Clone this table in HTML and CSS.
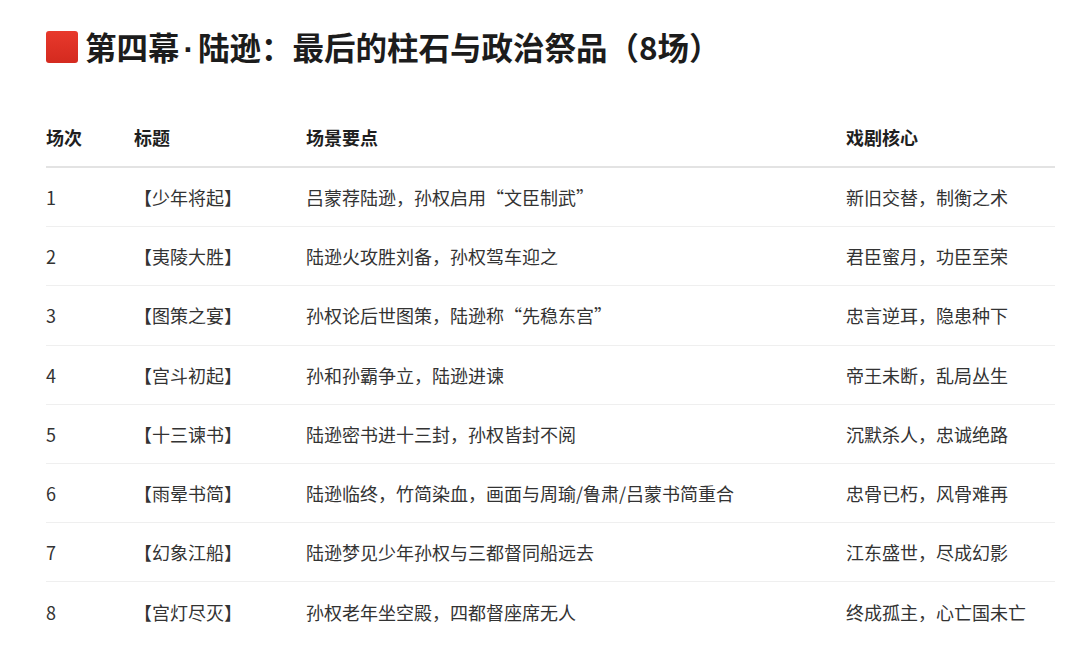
FILE: index.html
```html
<!DOCTYPE html>
<html lang="zh">
<head>
<meta charset="utf-8">
<link rel="stylesheet" href="styles.css">
</head>
<body>
<div class="page">
  <h1 class="title"><span class="mark"></span><span>第四幕<span class="sep">·</span>陆逊：最后的柱石与政治祭品（8场）</span></h1>
  <div class="table">
    <div class="row head">
      <div>场次</div><div>标题</div><div>场景要点</div><div>戏剧核心</div>
    </div>
    <div class="row"><div>1</div><div>【少年将起】</div><div>吕蒙荐陆逊，孙权启用“文臣制武”</div><div>新旧交替，制衡之术</div></div>
    <div class="row"><div>2</div><div>【夷陵大胜】</div><div>陆逊火攻胜刘备，孙权驾车迎之</div><div>君臣蜜月，功臣至荣</div></div>
    <div class="row"><div>3</div><div>【图策之宴】</div><div>孙权论后世图策，陆逊称“先稳东宫”</div><div>忠言逆耳，隐患种下</div></div>
    <div class="row"><div>4</div><div>【宫斗初起】</div><div>孙和孙霸争立，陆逊进谏</div><div>帝王未断，乱局丛生</div></div>
    <div class="row"><div>5</div><div>【十三谏书】</div><div>陆逊密书进十三封，孙权皆封不阅</div><div>沉默杀人，忠诚绝路</div></div>
    <div class="row"><div>6</div><div>【雨晕书简】</div><div>陆逊临终，竹简染血，画面与周瑜/鲁肃/吕蒙书简重合</div><div>忠骨已朽，风骨难再</div></div>
    <div class="row"><div>7</div><div>【幻象江船】</div><div>陆逊梦见少年孙权与三都督同船远去</div><div>江东盛世，尽成幻影</div></div>
    <div class="row last"><div>8</div><div>【宫灯尽灭】</div><div>孙权老年坐空殿，四都督座席无人</div><div>终成孤主，心亡国未亡</div></div>
  </div>
</div>
</body>
</html>
```
FILE: styles.css
```css
html, body {
  margin: 0;
  padding: 0;
  background: #ffffff;
}
body {
  font-family: "Noto Sans CJK SC", "Noto Sans", sans-serif;
  color: #333333;
}
.page {
  padding: 27px 25px 0 46px;
}
.title {
  display: flex;
  align-items: center;
  gap: 7px;
  margin: 0 0 41px 0;
  height: 40px;
  font-size: 31.5px;
  line-height: 40px;
  font-weight: 700;
  color: #1c1c1c;
}
.sep {
  font-family: "Liberation Sans", sans-serif;
  padding: 0 4px;
}
.mark {
  width: 32px;
  height: 32px;
  border-radius: 3px;
  background: linear-gradient(180deg, #e8392c 0%, #d42a1f 100%);
  flex: none;
}
.table {
  width: 1009px;
}
.row {
  display: grid;
  grid-template-columns: 88px 172px 540px 209px;
  align-items: center;
  height: 59.2px;
  box-sizing: border-box;
  border-bottom: 1px solid #efefef;
  font-size: 18px;
  line-height: 26px;
  color: #333333;
}
.row > div {
  white-space: nowrap;
}
.row.head {
  height: 60px;
  border-bottom: 2px solid #e3e3e3;
  font-weight: 700;
  font-size: 18px;
  color: #1f1f1f;
}
.row.last {
  border-bottom: none;
}
```
